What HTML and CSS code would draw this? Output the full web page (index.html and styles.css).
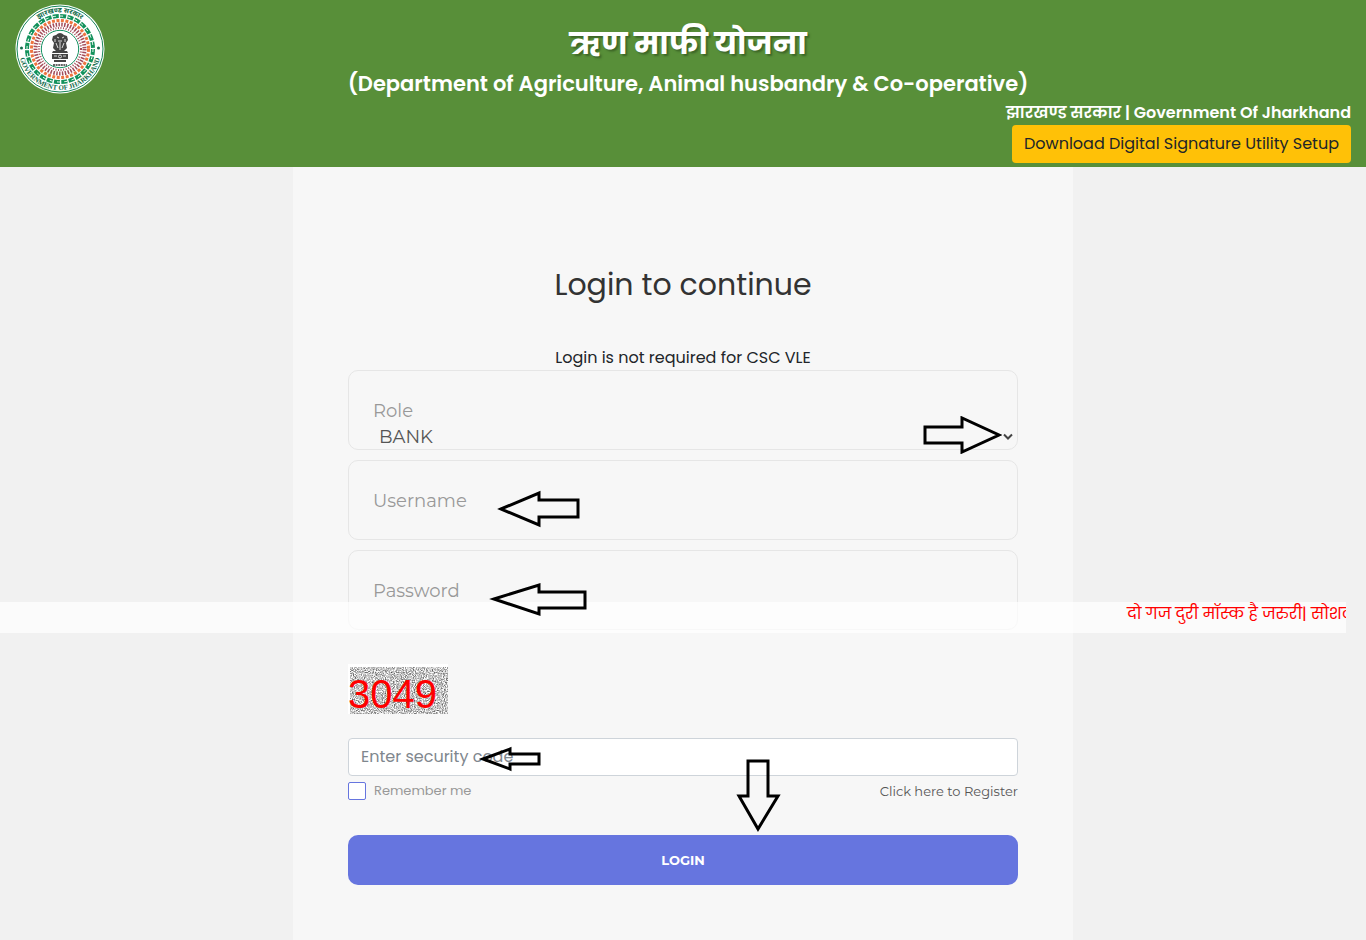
FILE: index.html
```html
<!DOCTYPE html>
<html lang="en">
<head>
<meta charset="utf-8">
<meta name="viewport" content="width=device-width, initial-scale=1">
<title>ऋण माफी योजना</title>
<link rel="stylesheet" href="styles.css">
</head>
<body>
<header class="site-header">
  <svg class="emblem" viewBox="0 0 90 90" role="img" aria-label="Government of Jharkhand">
    <defs>
      <path id="arc-top" d="M8.500 45A36.500 36.500 0 0 1 81.500 45"/>
      <path id="arc-bottom" d="M4 45A41 41 0 0 0 86 45"/>
    </defs>
    <circle cx="45" cy="45" r="44.500" fill="#fff"/>
    <circle cx="45" cy="45" r="43" fill="none" stroke="#16855a"/>
    <circle cx="45" cy="45" r="33" fill="none" stroke="#13925c" stroke-width="4" stroke-dasharray="6 1.400"/>
    <circle cx="45" cy="45" r="33" fill="none" stroke="#fff" stroke-width="1" stroke-dasharray="3 4.400"/>
    <circle cx="45" cy="45" r="28.500" fill="none" stroke="#ee7440" stroke-width="3" stroke-dasharray="3 1.500"/>
    <circle cx="45" cy="45" r="24.500" fill="none" stroke="#a34b59" stroke-width="4" stroke-dasharray="1.500 1.400"/>
    <circle cx="45" cy="45" r="21" fill="none" stroke="#a34b59" stroke-width="2" stroke-dasharray="1 1.600"/>
    <circle cx="45" cy="45" r="18.700" fill="none" stroke="#159061" stroke-width="1"/>
    <circle cx="6.500" cy="44" r="1.500" fill="#126b4b"/>
    <circle cx="83.500" cy="44" r="1.500" fill="#126b4b"/>
    <text class="emblem-text-top"><textPath href="#arc-top" startOffset="50%" text-anchor="middle">झारखण्ड सरकार</textPath></text>
    <text class="emblem-text-bottom"><textPath href="#arc-bottom" startOffset="50%" text-anchor="middle">GOVERNMENT OF JHARKHAND</textPath></text>
    <g fill="#444">
      <path d="M41 31q4-4 8 0l3 1 1 4-2 3 1 5-3 3h-8l-3-3 1-5-2-3 1-4z"/>
      <path d="M38 47h14l1 2H37zM37 50h16v5H37zM39 56h12v2H39z"/>
    </g>
    <g fill="none" stroke="#ddd" stroke-width="1">
      <path d="M42 33l2 1m3 0l2-1M43 37h4M41 39l2 5m6-5l-2 5M45 38v8M40 35v3m10-3v3"/>
      <circle cx="45" cy="52.500" r="1.500"/><path d="M39 52h3m6 0h3"/>
    </g>
    <path d="M38 61h14" stroke="#333" stroke-width="1.500" stroke-dasharray="2 .6"/>
  </svg>
  <div class="titles">
    <h1>ऋण माफी योजना</h1>
    <h2>(Department of Agriculture, Animal husbandry &amp; Co-operative)</h2>
  </div>
  <div class="header-side">
    <strong>झारखण्ड सरकार | Government Of Jharkhand</strong>
    <a class="download" href="#">Download Digital Signature Utility Setup</a>
  </div>
</header>

<main class="panel">
  <form class="login">
    <h3>Login to continue</h3>
    <p class="note">Login is not required for CSC VLE</p>

    <div class="field">
      <label for="role">Role</label>
      <select id="role"><option>BANK</option></select>
      <svg class="chevron" viewBox="0 0 10 8" aria-hidden="true"><path d="M1 1.500l4 4 4-4"/></svg>
      <svg class="arrow arrow-role" width="80" height="38" aria-hidden="true"><path d="M3 11H40V2L77 19L40 36V27H3Z"/></svg>
    </div>
    <div class="field">
      <label for="user">Username</label>
      <input id="user" type="text">
      <svg class="arrow arrow-user" width="84" height="38" aria-hidden="true"><path d="M4 19L42 3V10H81V27H42V35Z"/></svg>
    </div>
    <div class="field">
      <label for="pass">Password</label>
      <input id="pass" type="password">
      <svg class="arrow arrow-pass" width="99" height="36" aria-hidden="true"><path d="M5 18L50 4V11H96V27H50V33Z"/></svg>
    </div>

    <div class="captcha">
      <svg class="noise" aria-hidden="true">
        <filter id="grain" x="0" y="0" width="100%" height="100%" color-interpolation-filters="sRGB">
          <feTurbulence type="fractalNoise" baseFrequency="0.9" numOctaves="2" seed="4"/>
          <feColorMatrix values="1.300 0 0 0 0.120  1.300 0 0 0 0.120  1.300 0 0 0 0.120  0 0 0 0 1"/>
        </filter>
        <rect width="100%" height="100%" filter="url(#grain)"/>
      </svg>
      <span>3049</span>
    </div>

    <div class="code">
      <input type="text" placeholder="Enter security code" aria-label="Enter security code">
      <svg class="arrow arrow-code" width="65" height="28" aria-hidden="true"><path d="M6 15L33 5V10H62V20H33V25Z"/></svg>
    </div>

    <div class="options">
      <label class="remember"><input type="checkbox">Remember me</label>
      <a href="#">Click here to Register</a>
    </div>

    <div class="submit">
      <button type="submit">LOGIN</button>
      <svg class="arrow arrow-login" width="46" height="74" aria-hidden="true"><path d="M12 2H32V37H42L22 70L3 37H12Z"/></svg>
    </div>
  </form>
</main>

<div class="ticker"><span>दो गज दुरी मॉस्क है जरुरी| सोशल</span></div>
</body>
</html>
```
FILE: styles.css
```css
* { box-sizing: border-box; }

body {
  margin: 0;
  min-height: 100vh;
  position: relative;
  display: flex;
  flex-direction: column;
  background: #f1f1f1;
  font-family: Poppins, Inter, "Noto Sans", "Noto Sans Devanagari", sans-serif;
  font-size: 16px;
  line-height: 24px;
  color: #212529;
  overflow-x: hidden;
}

h1, h2, h3, p { margin: 0; }

.site-header {
  display: grid;
  grid-template-columns: 90px 1fr 80px;
  padding: 4px 15px;
  background: #588f39;
  color: #fff;
}

.emblem { width: 90px; height: 90px; }

.emblem-text-top {
  font: bold 7px "Noto Sans", sans-serif;
  fill: #126b4b;
}

.emblem-text-bottom {
  font: bold 7px "Liberation Serif", serif;
  fill: #126b4b;
}

.titles {
  padding-top: 16px;
  text-align: center;
  white-space: nowrap;
}

.titles h1 {
  font-size: 30px;
  line-height: 48px;
  text-shadow: 2px 2px 2px #3d6627;
}

.titles h2 {
  font-size: 21px;
  font-weight: 600;
  line-height: 32px;
}

.header-side {
  grid-column: 1 / -1;
  justify-self: end;
  display: flex;
  flex-direction: column;
  align-items: flex-end;
}

.header-side strong { font-weight: 600; line-height: 25px; }

.download {
  padding: 7px 12px;
  border-radius: 4px;
  background: #ffc107;
  color: #212529;
  text-decoration: none;
  white-space: nowrap;
}

.panel {
  flex: 1;
  width: 100%;
  max-width: 780px;
  margin: 0 auto;
  padding: 96px 55px 55px;
  background: #f7f7f7;
}

.login { display: flex; flex-direction: column; }

.login h3 {
  font-size: 30px;
  font-weight: 400;
  line-height: 44px;
  text-align: center;
  color: #333;
}

.note {
  margin-top: 39px;
  text-align: center;
}

.field {
  position: relative;
  display: flex;
  flex-direction: column;
  height: 80px;
  margin-bottom: 10px;
  padding-top: 28px;
  border: 1px solid #e6e6e6;
  border-radius: 10px;
}

.field label {
  padding-left: 24px;
  font-family: Montserrat, Inter, sans-serif;
  font-size: 18px;
  line-height: 24px;
  color: #999;
}

.field select,
.field input {
  flex: 1;
  width: 100%;
  min-height: 0;
  border: 0;
  outline: 0;
  appearance: none;
  background: transparent;
  font-family: Montserrat, Inter, sans-serif;
  font-size: 18px;
  color: #555;
}

.field select { padding: 2px 30px 0; }
.field input { padding: 0 24px; }

.chevron {
  position: absolute;
  right: 4px;
  bottom: 8px;
  width: 10px;
  height: 8px;
  fill: none;
  stroke: #444;
  stroke-width: 2;
}

.arrow {
  position: absolute;
  z-index: 2;
  fill: none;
  stroke: #000;
  stroke-width: 3;
  pointer-events: none;
}

.arrow-role { right: 15px; top: 45px; }
.arrow-user { left: 148px; top: 29px; }
.arrow-pass { left: 140px; top: 30px; }
.arrow-code { left: 129px; top: 6px; }
.arrow-login { left: 388px; bottom: 52px; }

.captcha {
  position: relative;
  width: 100px;
  height: 50px;
  margin-top: 24px;
  padding: 3px 0 0 2px;
  background: #fff;
}

.noise {
  display: block;
  width: 98px;
  height: 47px;
}

.captcha span {
  position: absolute;
  left: 0;
  top: 8px;
  font-family: "Liberation Sans", sans-serif;
  font-size: 40px;
  line-height: 44px;
  color: #f00;
}

.code {
  position: relative;
  margin-top: 24px;
}

.code input {
  display: block;
  width: 100%;
  height: 38px;
  padding: 5px 12px 7px;
  border: 1px solid #ced4da;
  border-radius: 4px;
  background: #fff;
  font: inherit;
}

.code input::placeholder { color: #7f878e; opacity: 1; }

.options {
  display: flex;
  justify-content: space-between;
  align-items: center;
  height: 30px;
  font-size: 13px;
  color: #999;
}

.options a {
  color: #555;
  font-family: Montserrat, Inter, sans-serif;
  text-decoration: none;
}

.remember {
  display: flex;
  align-items: center;
  gap: 8px;
}

.remember input {
  appearance: none;
  width: 18px;
  height: 18px;
  margin: 0;
  border: 1px solid #6675df;
  border-radius: 2px;
  background: #fff;
}

.submit {
  position: relative;
  margin-top: 29px;
}

.submit button {
  display: block;
  width: 100%;
  height: 50px;
  border: 0;
  border-radius: 10px;
  background: #6675df;
  color: #fff;
  font-family: Montserrat, Inter, sans-serif;
  font-size: 13px;
  font-weight: 700;
}

.ticker {
  position: absolute;
  left: 0;
  right: 20px;
  top: 602px;
  height: 31px;
  padding-left: 1127px;
  overflow: hidden;
  background: rgba(255, 255, 255, 0.7);
  color: #f00;
  white-space: nowrap;
}
```
